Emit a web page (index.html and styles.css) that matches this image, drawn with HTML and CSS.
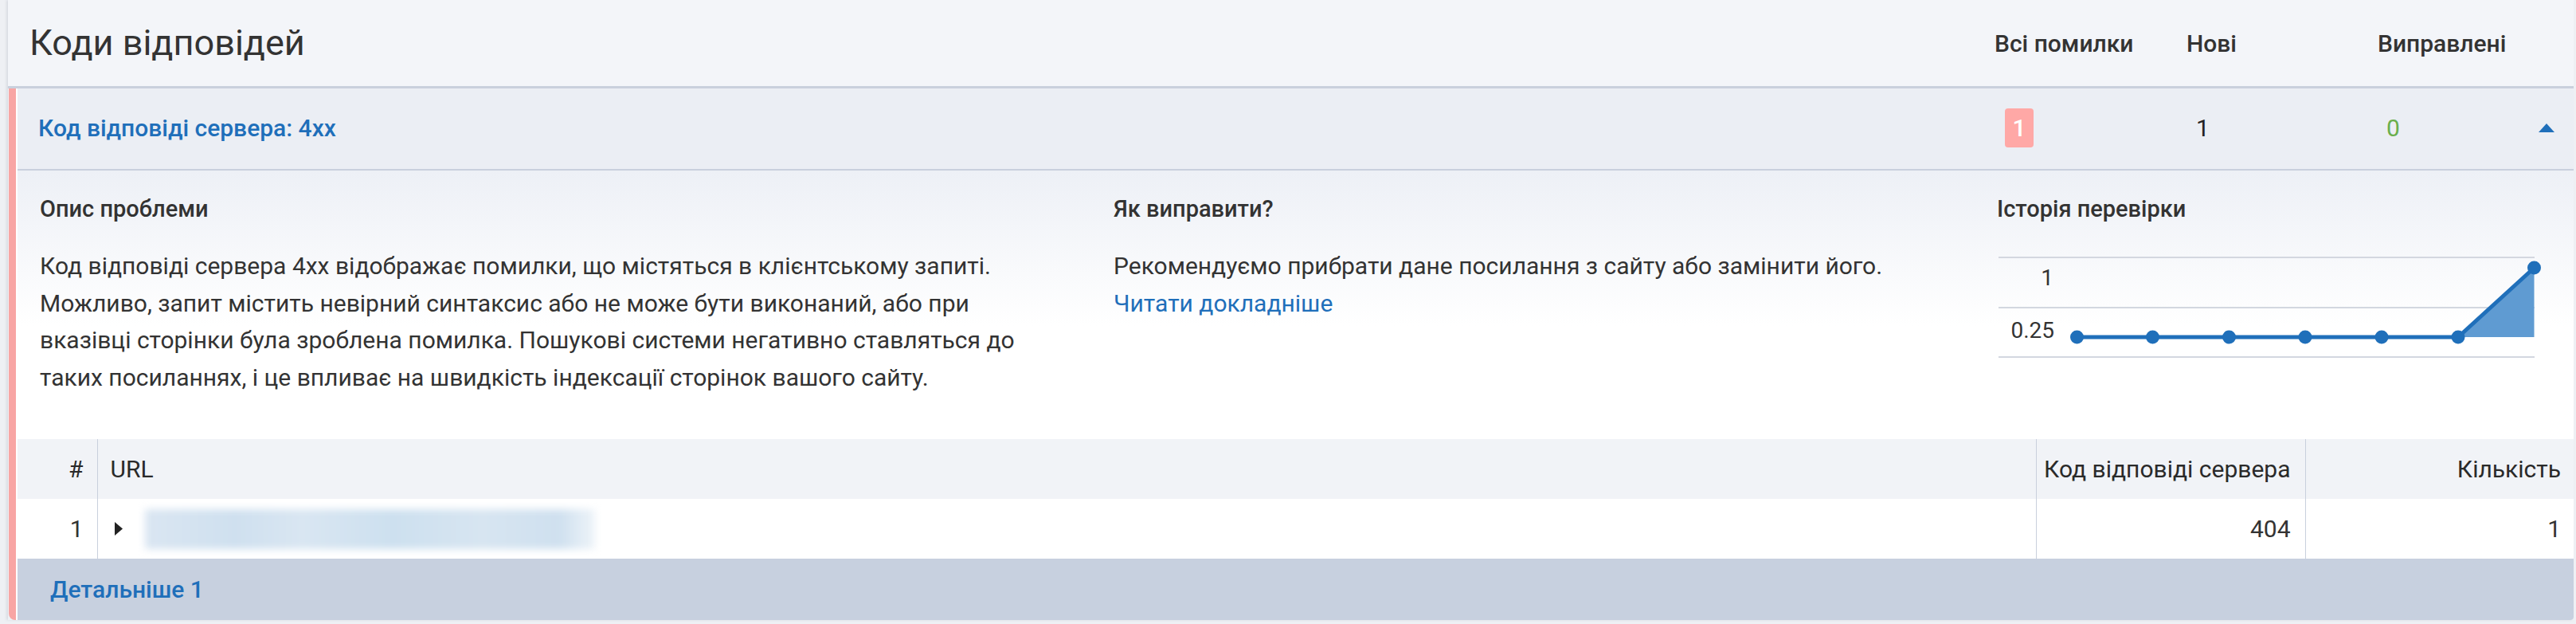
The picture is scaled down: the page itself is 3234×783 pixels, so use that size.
FILE: index.html
```html
<!DOCTYPE html>
<html lang="uk">
<head>
<meta charset="utf-8">
<title>Коди відповідей</title>
<link rel="stylesheet" href="styles.css">
</head>
<body>
<div class="panel">
  <div class="panel-head">
    <h1 class="title">Коди відповідей</h1>
    <div class="hcol hcol-all">Всі помилки</div>
    <div class="hcol hcol-new">Нові</div>
    <div class="hcol hcol-fixed">Виправлені</div>
  </div>
  <div class="group">
    <div class="group-row">
      <a class="group-title" href="#">Код відповіді сервера: 4xx</a>
      <div class="gcell gcell-all"><span class="badge">1</span></div>
      <div class="gcell gcell-new">1</div>
      <div class="gcell gcell-fixed">0</div>
      <div class="gcell gcell-toggle">
        <svg class="caret-up" width="20" height="11" viewBox="0 0 20 11"><path d="M0 11 L10 0 L20 11 Z" fill="#1f6fba"/></svg>
      </div>
    </div>
    <div class="details">
      <div class="dcol">
        <h3 class="dhead">Опис проблеми</h3>
        <p class="dtext">Код відповіді сервера 4xx відображає помилки, що містяться в клієнтському запиті. Можливо, запит містить невірний синтаксис або не може бути виконаний, або при вказівці сторінки була зроблена помилка. Пошукові системи негативно ставляться до таких посиланнях, і це впливає на швидкість індексації сторінок вашого сайту.</p>
      </div>
      <div class="dcol">
        <h3 class="dhead">Як виправити?</h3>
        <p class="dtext">Рекомендуємо прибрати дане посилання з сайту або замінити його.</p>
        <a class="dlink" href="#">Читати докладніше</a>
      </div>
      <div class="dcol">
        <h3 class="dhead">Історія перевірки</h3>
        <svg class="chart" width="690" height="150" viewBox="0 0 690 150">
          <line x1="2" y1="13" x2="675" y2="13" stroke="#d3d7e0" stroke-width="2"/>
          <line x1="2" y1="76" x2="675" y2="76" stroke="#d3d7e0" stroke-width="2"/>
          <line x1="2" y1="138" x2="675" y2="138" stroke="#d3d7e0" stroke-width="2"/>
          <text class="ylabel" x="71" y="48" text-anchor="end">1</text>
          <text class="ylabel" x="72" y="114" text-anchor="end">0.25</text>
          <polygon points="579,113 674.5,26 674.5,113" fill="#5f9bd2"/>
          <polyline points="100.5,113 195.5,113 291.5,113 387,113 483,113 579,113 674.5,26" fill="none" stroke="#1f6fba" stroke-width="5" stroke-linejoin="round"/>
          <g fill="#1f6fba">
            <circle cx="100.5" cy="113" r="8.5"/>
            <circle cx="195.5" cy="113" r="8.5"/>
            <circle cx="291.5" cy="113" r="8.5"/>
            <circle cx="387" cy="113" r="8.5"/>
            <circle cx="483" cy="113" r="8.5"/>
            <circle cx="579" cy="113" r="8.5"/>
            <circle cx="674.5" cy="26" r="8.5"/>
          </g>
        </svg>
      </div>
    </div>
    <table class="urls">
      <thead>
        <tr>
          <th class="c-num">#</th>
          <th class="c-url">URL</th>
          <th class="c-code">Код відповіді сервера</th>
          <th class="c-count">Кількість</th>
        </tr>
      </thead>
      <tbody>
        <tr>
          <td class="c-num">1</td>
          <td class="c-url">
            <div class="url-cell">
              <svg class="caret-right" width="12" height="17" viewBox="0 0 12 17"><path d="M1 0 L11 8.5 L1 17 Z" fill="#222"/></svg>
              <span class="blurred"></span>
            </div>
          </td>
          <td class="c-code">404</td>
          <td class="c-count">1</td>
        </tr>
      </tbody>
    </table>
    <div class="group-foot">
      <a class="more" href="#">Детальніше 1</a>
    </div>
  </div>
</div>
</body>
</html>
```

FILE: styles.css
```css
* {
  box-sizing: border-box;
}

html, body {
  margin: 0;
  padding: 0;
}

body {
  background: #eef0f4;
  font-family: Roboto, "Noto Sans", sans-serif;
  color: #333;
  width: 3234px;
  height: 783px;
  overflow: hidden;
}

a {
  text-decoration: none;
}

.panel {
  margin-left: 10px;
  width: 3221px;
  box-shadow: -2px 0 3px rgba(120, 130, 150, 0.18);
}

/* ---------- header ---------- */
.panel-head {
  height: 111px;
  display: flex;
  align-items: center;
  padding-left: 27px;
  background: #f3f5f9;
  border-bottom: 3px solid #c9d0dd;
}

.title {
  flex: 1;
  margin: 0;
  font-size: 45px;
  font-weight: 400;
  color: #333;
  line-height: 52px;
}

.hcol {
  font-size: 30px;
  font-weight: 500;
  color: #333;
}

.hcol-all { width: 241px; }
.hcol-new { width: 240px; }
.hcol-fixed { width: 246px; }

/* ---------- group ---------- */
.group {
  border-left: 9px solid #f8a5a4;
  margin-left: 1px;
  background: #fff;
  padding-left: 2px;
  border-bottom-left-radius: 8px;
  border-bottom-right-radius: 4px;
  overflow: hidden;
}

.group-row {
  height: 103px;
  display: flex;
  align-items: center;
  background: #ebeef4;
  border-bottom: 2px solid #c9d0dd;
  padding-left: 26px;
  padding-bottom: 2px;
}

.group-title {
  flex: 1;
  font-size: 30px;
  font-weight: 500;
  color: #1f6fba;
}

.gcell {
  font-size: 30px;
  display: flex;
  align-items: center;
}

.gcell-all { width: 240px; }
.gcell-new { width: 239px; color: #222; }
.gcell-fixed { width: 191px; color: #6aaf4c; }
.gcell-toggle { width: 44px; }

.badge {
  display: inline-flex;
  align-items: center;
  justify-content: center;
  width: 36px;
  height: 49px;
  background: #ffa8a6;
  border-radius: 4px;
  color: #fff;
  font-weight: 500;
}

.caret-up {
  display: block;
}

/* ---------- details ---------- */
.details {
  display: grid;
  grid-template-columns: 1348px 1109px 1fr;
  height: 337px;
  padding: 31px 0 0 28px;
  background: linear-gradient(180deg, #edf0f6 0%, #ffffff 58%, #ffffff 100%);
}

.dhead {
  margin: 0;
  font-size: 29px;
  font-weight: 500;
  line-height: 34px;
  color: #333;
}

.dtext {
  margin: 32px 0 0;
  font-size: 30px;
  line-height: 46.7px;
  color: #333;
  max-width: 1260px;
}

.dlink {
  display: block;
  font-size: 30px;
  line-height: 46.7px;
  color: #1f6fba;
}

.chart {
  display: block;
  margin-top: 31px;
}

.ylabel {
  font-family: Roboto, sans-serif;
  font-size: 28px;
  fill: #333;
}

/* ---------- table ---------- */
.urls {
  width: 100%;
  border-collapse: collapse;
  table-layout: fixed;
  font-size: 30px;
}

.urls th,
.urls td {
  height: 75px;
  padding: 0;
  vertical-align: middle;
  white-space: nowrap;
}

.urls th {
  background: #f1f3f7;
  font-weight: 400;
  color: #2a2a2a;
}

.urls td {
  background: #fff;
  color: #333;
}

.c-num {
  width: 100px;
  text-align: right;
  padding-right: 17px !important;
  border-right: 1px solid #c9d0dd;
}

.c-url {
  text-align: left;
  padding-left: 16px !important;
}

.c-code {
  width: 338px;
  text-align: right;
  padding-right: 18px !important;
  border-left: 1px solid #c9d0dd;
  border-right: 1px solid #c9d0dd;
}

.c-count {
  width: 337px;
  text-align: right;
  padding-right: 16px !important;
}

.url-cell {
  display: flex;
  align-items: center;
  gap: 27px;
  padding-left: 4px;
}

.caret-right {
  display: block;
}

.blurred {
  display: inline-block;
  width: 565px;
  height: 50px;
  background: linear-gradient(90deg, #dae6f2 0%, #cfe0ef 20%, #d9e6f2 35%, #cde0ef 55%, #d7e5f1 75%, #cfe0ef 92%, #eef4f9 100%);
  filter: blur(5px);
}

/* ---------- footer ---------- */
.group-foot {
  height: 77px;
  display: flex;
  align-items: center;
  padding-left: 41px;
  background: #c7d0df;
}

.more {
  font-size: 30px;
  font-weight: 500;
  color: #1f6fba;
}
```
